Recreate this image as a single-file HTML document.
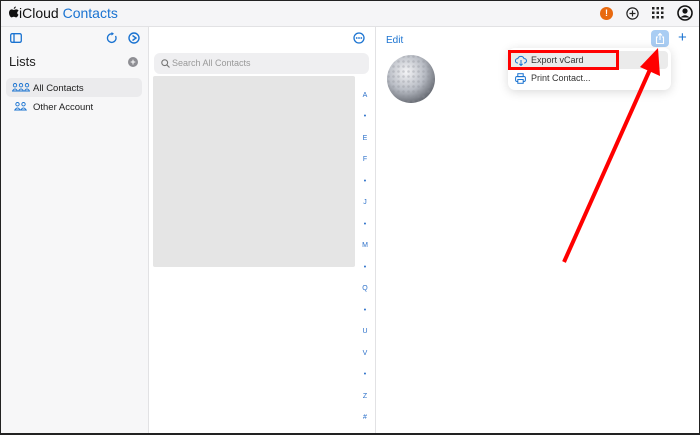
<!DOCTYPE html>
<html><head><meta charset="utf-8"><style>
*{box-sizing:border-box;margin:0;padding:0}
body{width:700px;height:435px;overflow:hidden;font-family:"Liberation Sans",sans-serif;background:#fff;position:relative}
.frame{position:absolute;inset:0;border:1px solid #222;border-bottom:2px solid #222}
.hdr{position:absolute;left:0;top:0;width:700px;height:27px;background:#f5f5f7;border-bottom:1px solid #e2e2e4}
.side{position:absolute;left:0;top:27px;width:149px;height:408px;background:#f7f7f8;border-right:1px solid #e2e2e4}
.mid{position:absolute;left:149px;top:27px;width:227px;height:408px;background:#fff;border-right:1px solid #e2e2e4}
.abs{position:absolute}
.blue{color:#1a73d1}
.letters div{position:absolute;left:362px;width:6px;text-align:center;font-size:7px;color:#2a6fc9}
</style></head><body>
<div class="hdr"></div>
<svg class="abs" style="left:9px;top:6px" width="10" height="12"><path d="M6.8 0.5 C6.9 1.7 5.9 2.9 4.8 2.8 C4.7 1.7 5.7 0.6 6.8 0.5Z M9.5 8.6 C9 9.8 8.2 11.4 7 11.4 C6 11.4 5.8 10.8 4.8 10.8 C3.8 10.8 3.5 11.4 2.6 11.4 C1.4 11.4 0 9 0 6.9 C0 4.6 1.4 3.4 2.7 3.4 C3.7 3.4 4.3 4 4.9 4 C5.5 4 6.1 3.3 7.3 3.4 C7.8 3.4 9 3.6 9.6 4.7 C7.6 5.9 8 8.2 9.5 8.6Z" fill="#111"/></svg>
<div class="abs" style="left:19px;top:5px;font-size:14px;color:#111">iCloud <span class="blue">Contacts</span></div>
<div class="abs" style="left:600px;top:7px;width:13px;height:13px;border-radius:50%;background:#e8690f;color:#fff;font-size:9px;font-weight:bold;text-align:center;line-height:13px">!</div>
<svg class="abs" style="left:626px;top:7px" width="13" height="13"><circle cx="6.5" cy="6.5" r="5.6" fill="none" stroke="#222" stroke-width="1.2"/><path d="M6.5 3.5 V9.5 M3.5 6.5 H9.5" stroke="#222" stroke-width="1.2"/></svg>
<svg class="abs" style="left:652px;top:7px" width="12" height="12"><g fill="#222"><rect x="0" y="0" width="2.5" height="2.5"/><rect x="4.5" y="0" width="2.5" height="2.5"/><rect x="9" y="0" width="2.5" height="2.5"/><rect x="0" y="4.5" width="2.5" height="2.5"/><rect x="4.5" y="4.5" width="2.5" height="2.5"/><rect x="9" y="4.5" width="2.5" height="2.5"/><rect x="0" y="9" width="2.5" height="2.5"/><rect x="4.5" y="9" width="2.5" height="2.5"/><rect x="9" y="9" width="2.5" height="2.5"/></g></svg>
<svg class="abs" style="left:677px;top:5px" width="16" height="16"><circle cx="8" cy="8" r="7" fill="none" stroke="#111" stroke-width="1.6"/><circle cx="8" cy="6" r="2.6" fill="#111"/><path d="M3.5 12.5 Q8 8 12.5 12.5" fill="#111"/></svg>

<div class="side"></div>
<svg class="abs" style="left:10px;top:33px" width="12" height="10"><rect x="0.7" y="0.7" width="10.6" height="8.6" rx="1.5" fill="none" stroke="#1a73d1" stroke-width="1.3"/><line x1="4" y1="1" x2="4" y2="9" stroke="#1a73d1" stroke-width="1.3"/></svg>
<svg class="abs" style="left:106px;top:32px" width="12" height="12"><path d="M9.5 4 A4.3 4.3 0 1 1 6 1.8" fill="none" stroke="#1a73d1" stroke-width="1.3"/><path d="M5.5 0 L8 1.8 L5.5 3.6Z" fill="#1a73d1"/></svg>
<svg class="abs" style="left:128px;top:32px" width="12" height="12"><circle cx="6" cy="6" r="5" fill="none" stroke="#1a73d1" stroke-width="1.4"/><path d="M4.5 3.5 L8 6 L4.5 8.5" fill="none" stroke="#1a73d1" stroke-width="1.4"/></svg>
<div class="abs" style="left:9px;top:54px;font-size:13px;color:#222">Lists</div>
<div class="abs" style="left:128px;top:57px;width:10px;height:10px;border-radius:50%;background:#8e8e93;color:#fff;font-size:9px;line-height:10px;text-align:center;font-weight:bold">+</div>
<div class="abs" style="left:6px;top:78px;width:136px;height:19px;border-radius:5px;background:#ebebed"></div>
<svg class="abs" style="left:12px;top:83px" width="18" height="9"><g fill="none" stroke="#1a73d1" stroke-width="0.9"><circle cx="3" cy="2.2" r="1.7"/><path d="M0.5 8 Q3 3.8 5.5 8Z"/><circle cx="9" cy="2.2" r="1.7"/><path d="M6.5 8 Q9 3.8 11.5 8Z"/><circle cx="15" cy="2.2" r="1.7"/><path d="M12.5 8 Q15 3.8 17.5 8Z"/></g></svg>
<div class="abs" style="left:33px;top:83px;font-size:9.5px;color:#222">All Contacts</div>
<svg class="abs" style="left:14px;top:102px" width="13" height="9"><g fill="none" stroke="#1a73d1" stroke-width="0.9"><circle cx="3.5" cy="2.2" r="1.7"/><path d="M0.8 8 Q3.5 3.8 6.2 8Z"/><circle cx="9.5" cy="2.2" r="1.7"/><path d="M6.8 8 Q9.5 3.8 12.2 8Z"/></g></svg>
<div class="abs" style="left:33px;top:102px;font-size:9.5px;color:#222">Other Account</div>

<div class="mid"></div>
<svg class="abs" style="left:353px;top:32px" width="12" height="12"><circle cx="6" cy="6" r="5" fill="none" stroke="#1a73d1" stroke-width="1.3"/><circle cx="3.7" cy="6" r=".9" fill="#1a73d1"/><circle cx="6" cy="6" r=".9" fill="#1a73d1"/><circle cx="8.3" cy="6" r=".9" fill="#1a73d1"/></svg>
<div class="abs" style="left:154px;top:53px;width:215px;height:21px;border-radius:6px;background:#efeff1"></div>
<svg class="abs" style="left:161px;top:59px" width="9" height="9"><circle cx="3.7" cy="3.7" r="2.9" fill="none" stroke="#777" stroke-width="1.1"/><line x1="5.8" y1="5.8" x2="8.5" y2="8.5" stroke="#777" stroke-width="1.1"/></svg>
<div class="abs" style="left:172px;top:58px;font-size:9px;color:#999">Search All Contacts</div>
<div class="abs" style="left:153px;top:76px;width:202px;height:191px;border-radius:2px;background:#e5e5e5"></div>
<div class="letters">
<div style="top:92px">A</div><div style="top:113px">•</div><div style="top:135px">E</div><div style="top:156px">F</div><div style="top:178px">•</div><div style="top:199px">J</div><div style="top:221px">•</div><div style="top:242px">M</div><div style="top:264px">•</div><div style="top:285px">Q</div><div style="top:307px">•</div><div style="top:328px">U</div><div style="top:350px">V</div><div style="top:371px">•</div><div style="top:393px">Z</div><div style="top:414px">#</div>
</div>

<div class="abs blue" style="left:386px;top:35px;font-size:10px">Edit</div>
<div class="abs" style="left:651px;top:30px;width:18px;height:17px;border-radius:4px;background:#a9cdf3"></div>
<svg class="abs" style="left:654px;top:32px" width="12" height="13"><path d="M4 5 H2.5 V11.5 H9.5 V5 H8" fill="none" stroke="#fff" stroke-width="1.1"/><path d="M6 8 V1.5 M4 3.5 L6 1.5 L8 3.5" fill="none" stroke="#fff" stroke-width="1.1"/></svg>
<div class="abs blue" style="left:678px;top:29px;font-size:15px">+</div>
<svg class="abs" style="left:386px;top:54px" width="52" height="52"><defs><radialGradient id="g" cx="40%" cy="35%" r="65%"><stop offset="0" stop-color="#f4f4f6"/><stop offset=".6" stop-color="#b8bcc4"/><stop offset="1" stop-color="#6c7078"/></radialGradient><pattern id="d" width="5" height="5" patternUnits="userSpaceOnUse"><circle cx="2.5" cy="2.5" r="1.3" fill="#8b8f97" opacity=".35"/></pattern></defs><circle cx="25" cy="25" r="24" fill="url(#g)"/><circle cx="25" cy="25" r="24" fill="url(#d)"/></svg>
<div class="abs" style="left:508px;top:48px;width:163px;height:42px;border-radius:7px;background:#fff;box-shadow:0 2px 10px rgba(0,0,0,.15)"></div>
<div class="abs" style="left:510px;top:51px;width:158px;height:18px;border-radius:4px;background:#ebebeb"></div>
<div class="abs" style="left:508px;top:50px;width:111px;height:20px;border:3px solid #f00"></div>
<svg class="abs" style="left:515px;top:55px" width="12" height="11"><path d="M3 8 H2.5 A2.2 2.2 0 0 1 2.8 3.6 A3.3 3.3 0 0 1 9 3.6 A2.2 2.2 0 0 1 9.5 8 H9" fill="none" stroke="#1a73d1" stroke-width="1"/><path d="M6 5 V10.5 M4.3 8.8 L6 10.5 L7.7 8.8" fill="none" stroke="#1a73d1" stroke-width="1"/></svg>
<div class="abs" style="left:531px;top:55px;font-size:9px;color:#333">Export vCard</div>
<svg class="abs" style="left:515px;top:73px" width="11" height="11"><rect x="0.6" y="3.5" width="9.8" height="5" rx="1.5" fill="none" stroke="#1a73d1" stroke-width="1"/><rect x="2.8" y="0.7" width="5.4" height="3" fill="none" stroke="#1a73d1" stroke-width="1"/><rect x="2.8" y="6.5" width="5.4" height="3.8" fill="#fff" stroke="#1a73d1" stroke-width="1"/></svg>
<div class="abs" style="left:531px;top:73px;font-size:9px;color:#333">Print Contact...</div>
<svg class="abs" style="left:0;top:0" width="700" height="435"><line x1="564" y1="262" x2="652" y2="65" stroke="#f00" stroke-width="4"/><path d="M658 48 L640 67 L660 76Z" fill="#f00"/></svg>
<div class="frame"></div>
</body></html>
